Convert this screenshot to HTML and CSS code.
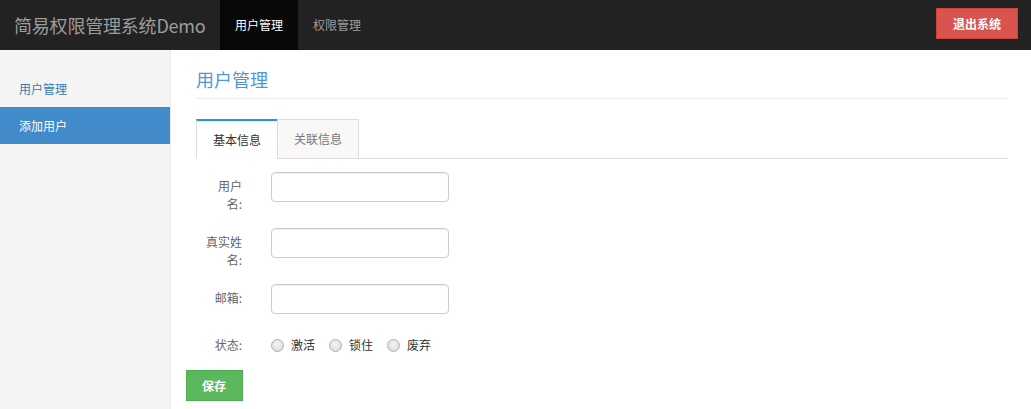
FILE: index.html
```html
<!DOCTYPE html>
<html lang="zh-CN">
<head>
<meta charset="utf-8">
<title>简易权限管理系统Demo</title>
<link rel="stylesheet" href="styles.css">
</head>
<body>
<header class="navbar">
  <a class="brand" href="#">简易权限管理系统Demo</a>
  <nav class="nav">
    <a class="nav-item active" href="#">用户管理</a>
    <a class="nav-item" href="#">权限管理</a>
  </nav>
  <button class="btn-logout" type="button">退出系统</button>
</header>
<div class="layout">
  <aside class="sidebar">
    <a class="side-item" href="#">用户管理</a>
    <a class="side-item active" href="#">添加用户</a>
  </aside>
  <main class="main">
    <h1 class="page-title">用户管理</h1>
    <ul class="tabs">
      <li class="tab active">基本信息</li>
      <li class="tab">关联信息</li>
    </ul>
    <form class="form">
      <div class="form-row">
        <label class="form-label">用户名:</label>
        <input class="form-input" type="text">
      </div>
      <div class="form-row">
        <label class="form-label">真实姓名:</label>
        <input class="form-input" type="text">
      </div>
      <div class="form-row">
        <label class="form-label">邮箱:</label>
        <input class="form-input" type="text">
      </div>
      <div class="form-row radio-row">
        <label class="form-label">状态:</label>
        <div class="radios">
          <label class="radio"><input type="radio" name="status"><span>激活</span></label>
          <label class="radio"><input type="radio" name="status"><span>锁住</span></label>
          <label class="radio"><input type="radio" name="status"><span>废弃</span></label>
        </div>
      </div>
      <button class="btn-save" type="button">保存</button>
    </form>
  </main>
</div>
</body>
</html>
```
FILE: styles.css
```css
* { box-sizing: border-box; }
html, body { margin: 0; padding: 0; }
body {
  font-family: "Noto Sans CJK SC", "Liberation Sans", sans-serif;
  font-size: 12px;
  color: #333;
  background: #fff;
}
a { text-decoration: none; }

.navbar {
  height: 50px;
  background: #222;
  display: flex;
  align-items: stretch;
}
.brand {
  padding: 0 15px 0 14px;
  font-size: 18px;
  line-height: 50px;
  color: #9d9d9d;
  width: 220px;
  white-space: nowrap;
  letter-spacing: -0.2px;
}
.nav { display: flex; }
.nav-item {
  padding: 0 15px;
  line-height: 50px;
  color: #9d9d9d;
  font-size: 12px;
}
.nav-item.active { background: #080808; color: #fff; }
.btn-logout {
  margin: 8px 13px 0 auto;
  height: 31px;
  padding: 0 16px;
  background: #d9534f;
  border: 1px solid #d43f3a;
  color: #fff;
  font-family: inherit;
  font-size: 12px;
  font-weight: bold;
  border-radius: 0;
}

.layout {
  display: flex;
  min-height: calc(100vh - 50px);
}
.sidebar {
  width: 171px;
  flex: none;
  background: #f4f4f4;
  border-right: 1px solid #e8e8e8;
  padding-top: 20px;
  display: flex;
  flex-direction: column;
}
.side-item {
  display: block;
  padding: 10px 19px;
  line-height: 17px;
  height: 37px;
  color: #337ab7;
}
.side-item.active { background: #428bca; color: #fff; }

.main {
  flex: 1;
  padding: 20px 23px 0 25px;
}
.page-title {
  margin: 0;
  font-size: 18px;
  font-weight: normal;
  line-height: 18px;
  color: #4f97d4;
  padding-bottom: 10px;
  border-bottom: 1px solid #eee;
}
.tabs {
  list-style: none;
  margin: 20px 0 0;
  padding: 0;
  display: flex;
  border-bottom: 1px solid #ddd;
}
.tab {
  height: 40px;
  margin-bottom: -1px;
  padding: 0 16px;
  line-height: 38px;
  background: #f9f8f7;
  border: 1px solid #ddd;
  color: #777;
  font-size: 12px;
}
.tab.active {
  background: #fff;
  color: #333;
  border-top: 2px solid #1aa0c8;
  border-right: none;
  border-bottom-color: #fff;
  line-height: 37px;
}

.form {
  margin: 13px 0 0 -10px;
}
.form-row {
  display: flex;
  align-items: flex-start;
  margin-bottom: 15px;
}
.form-label {
  width: 56px;
  padding: 5px 0 0 19px;
  text-align: right;
  line-height: 18px;
  color: #666;
  font-size: 12px;
}
.form-input {
  margin-left: 29px;
  width: 178px;
  height: 30px;
  border: 1px solid #ccc;
  border-radius: 4px;
  box-shadow: inset 0 1px 1px rgba(0,0,0,.075);
}
.radio-row { margin-bottom: 16px; }
.radio-row .form-label { padding-top: 7px; }
.radios {
  margin-left: 29px;
  padding-top: 7px;
  display: flex;
  gap: 14px;
  line-height: 18px;
}
.radio {
  display: flex;
  align-items: center;
  gap: 7px;
  color: #333;
}
.radio input {
  appearance: none;
  -webkit-appearance: none;
  margin: 0;
  width: 13px;
  height: 13px;
  border-radius: 50%;
  border: 1px solid #b0b0b0;
  background: radial-gradient(circle at 50% 40%, #f4f4f4 0%, #e0e0e0 70%, #d4d4d4 100%);
}
.btn-save {
  display: block;
  height: 31px;
  padding: 0 16px 0 15px;
  background: #5cb85c;
  border: 1px solid #4cae4c;
  color: #fff;
  font-family: inherit;
  font-size: 12px;
  font-weight: bold;
  border-radius: 0;
}
```
